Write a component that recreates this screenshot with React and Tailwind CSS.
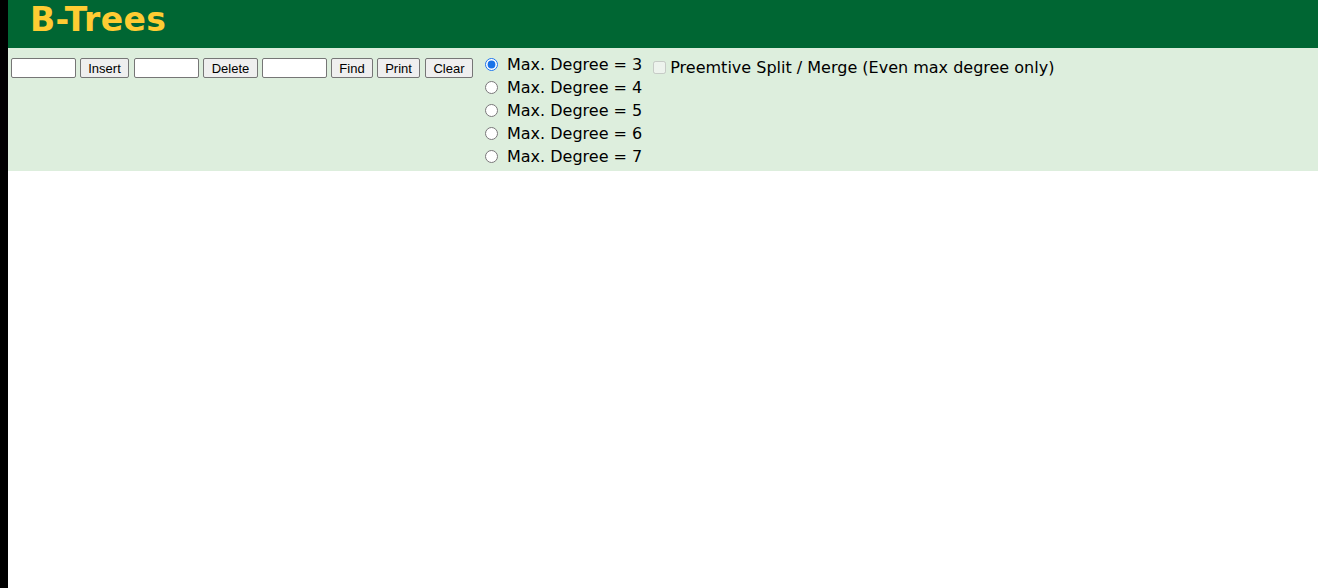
import { useState } from "react";

const degrees = [3, 4, 5, 6, 7];

function Btn({ children, className = "" }) {
  return (
    <button className={"h-[20px] px-0 border border-[#767676] bg-[#efefef] rounded-[2px] text-[13px] leading-none text-black font-['Liberation_Sans',Arial,sans-serif] " + className}>
      {children}
    </button>
  );
}

function Field({ className = "" }) {
  return <input type="text" className={"w-[65px] h-[20px] border border-[#767676] bg-white rounded-[2px] px-1 text-[13px] " + className} />;
}

export default function App() {
  const [degree, setDegree] = useState(3);

  return (
    <div className="flex min-h-[588px] bg-white font-['DejaVu_Sans',Verdana,sans-serif]">
      <div className="w-2 bg-black shrink-0" />
      <div className="flex-1 flex flex-col">
        {/* header */}
        <div className="h-12 bg-[#006633] flex items-start pt-[3px] pl-[22px]">
          <h1 className="text-[33px] font-bold text-[#ffcc33] leading-none tracking-[0.4px]">B-Trees</h1>
        </div>

        {/* controls */}
        <div className="h-[123px] bg-[#ddeedd] flex items-start pl-[3px]">
          <div className="flex items-center gap-[4px] mt-[10px]">
            <Field />
            <Btn className="w-[49px]">Insert</Btn>
            <Field className="ml-[1px]" />
            <Btn className="w-[55px]">Delete</Btn>
            <Field />
            <Btn className="w-[42px]">Find</Btn>
            <Btn className="w-[43px]">Print</Btn>
            <Btn className="w-[48px] ml-[1px]">Clear</Btn>
          </div>

          <div className="flex flex-col ml-[12px] mt-[5px]">
            {degrees.map((d) => (
              <label key={d} className="h-[23px] flex items-center text-[16px] text-black cursor-pointer">
                <input
                  type="radio"
                  name="degree"
                  checked={degree === d}
                  onChange={() => setDegree(d)}
                  className="w-[13px] h-[13px] m-0 mr-[9px] accent-[#1a73e8]"
                />
                Max. Degree = {d}
              </label>
            ))}
          </div>

          <label className="flex items-center ml-[11px] mt-[8px] h-[23px] text-[16px] text-black">
            <input type="checkbox" disabled className="w-[13px] h-[13px] m-0 mr-[4px]" />
            Preemtive Split / Merge (Even max degree only)
          </label>
        </div>
      </div>
    </div>
  );
}
